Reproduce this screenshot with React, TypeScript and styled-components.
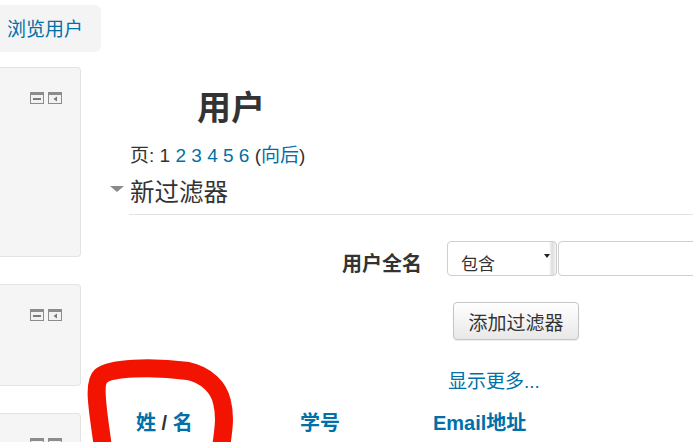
import React from "react";
import styled, { createGlobalStyle } from "styled-components";

const GlobalStyle = createGlobalStyle`
  html, body { margin: 0; padding: 0; background: #fff; }
  body {
    font-family: "Liberation Sans", "Noto Sans CJK SC", sans-serif;
    color: #333;
    width: 693px;
    height: 442px;
    overflow: hidden;
  }
`;

const Page = styled.div`
  position: relative;
  width: 693px;
  height: 442px;
  overflow: hidden;
  padding-top: 5px;
  box-sizing: border-box;
`;

const Tab = styled.a`
  display: block;
  width: 94px;
  height: 47px;
  padding-left: 7px;
  line-height: 50px;
  background: #f4f4f4;
  border-radius: 0 6px 6px 0;
  color: #0070a8;
  font-size: 19px;
  text-decoration: none;
`;

const Columns = styled.div`
  display: flex;
  margin-top: 15px;
`;

const Sidebar = styled.div`
  width: 81px;
  flex: none;
  display: flex;
  flex-direction: column;
  gap: 27px;
`;

const Block = styled.div<{ $h: number }>`
  height: ${(p) => p.$h}px;
  box-sizing: border-box;
  background: #f5f5f5;
  border: 1px solid #e3e3e3;
  border-left: none;
  border-radius: 0 4px 4px 0;
  padding: 24px 18px 0 0;
  display: flex;
  justify-content: flex-end;
  align-items: flex-start;
  gap: 4px;
  flex: none;
`;

const IconBox = styled.svg`
  width: 14px;
  height: 12px;
  display: block;
`;

const HideIcon = () => (
  <IconBox viewBox="0 0 14 12">
    <rect x="0.5" y="0.5" width="13" height="11" fill="#f2f2f2" stroke="#8c8c8c" />
    <rect x="0" y="0" width="14" height="3" fill="#8c8c8c" />
    <rect x="3" y="6" width="8" height="2" fill="#7a7a7a" />
  </IconBox>
);

const DockIcon = () => (
  <IconBox viewBox="0 0 14 12">
    <rect x="0.5" y="0.5" width="13" height="11" fill="#f2f2f2" stroke="#8c8c8c" />
    <rect x="0" y="0" width="14" height="3" fill="#8c8c8c" />
    <path d="M9 4.5 L5.5 7 L9 9.5 Z" fill="#7a7a7a" />
  </IconBox>
);

const Main = styled.div`
  flex: 1;
  margin-left: 29px;
`;

const Heading = styled.h2`
  margin: 21px 0 0 87px;
  font-size: 34px;
  line-height: 40px;
  font-weight: bold;
  color: #333;
`;

const Paging = styled.div`
  margin: 17px 0 0 20px;
  font-size: 19px;
  line-height: 22px;
  color: #333;
`;

const Link = styled.a`
  color: #0070a8;
  text-decoration: none;
`;

const Legend = styled.div`
  display: flex;
  align-items: center;
  margin-top: 7px;
  height: 32px;
`;

const Caret = styled.span`
  width: 0;
  height: 0;
  border-left: 7px solid transparent;
  border-right: 7px solid transparent;
  border-top: 6px solid #8a8a8a;
  margin: 0 6px 2px 0;
`;

const LegendText = styled.span`
  font-size: 24.5px;
  color: #333;
`;

const Rule = styled.div`
  margin: 8px 0 0 19px;
  border-top: 1px solid #e3e3e3;
`;

const FormRow = styled.div`
  display: grid;
  grid-template-columns: 337px auto 1fr;
  align-items: center;
  margin-top: 25px;
`;

const Label = styled.label`
  font-weight: bold;
  font-size: 20px;
  text-align: right;
  padding: 8px 25px 0 0;
  color: #333;
`;

const SelectBox = styled.div`
  width: 110px;
  height: 35px;
  box-sizing: border-box;
  border: 1px solid #cfcfcf;
  border-radius: 4px;
  display: flex;
  align-items: center;
  justify-content: space-between;
  padding: 7px 0 0 13px;
  font-size: 17px;
  color: #333;
  background: linear-gradient(to right, #fff 0, #fff 101px, #ddd 104px, #f4f4f4 108px);
`;

const Arrow = styled.span`
  width: 0;
  height: 0;
  border-left: 3px solid transparent;
  border-right: 3px solid transparent;
  border-top: 4px solid #222;
  margin: 0 6px 12px 0;
`;

const TextInput = styled.div`
  height: 35px;
  box-sizing: border-box;
  border: 1px solid #cfcfcf;
  border-radius: 4px;
  margin-left: 1px;
  margin-right: -10px;
  background: #fff;
`;

const Button = styled.button`
  display: block;
  margin: 25px 0 0 343px;
  width: 126px;
  height: 38px;
  border: 1px solid #c5c5c5;
  border-radius: 4px;
  background: linear-gradient(#fff, #e8e8e8);
  box-shadow: 0 1px 1px rgba(0, 0, 0, 0.08);
  font-family: "Liberation Sans", "Noto Sans CJK SC", sans-serif;
  font-size: 19px;
  color: #333;
  padding: 0;
`;

const More = styled.div`
  margin: 30px 0 0 338px;
  font-size: 19px;
  line-height: 24px;
`;

const Table = styled.table`
  margin: 18px 0 0 18px;
  width: 565px;
  table-layout: fixed;
  border-collapse: collapse;
`;

const Th = styled.th<{ $w?: number }>`
  text-align: left;
  font-size: 20px;
  font-weight: bold;
  padding: 0 0 8px 8px;
  line-height: 22px;
  width: ${(p) => (p.$w ? `${p.$w}px` : "auto")};
  border-bottom: 2px solid #ddd;
  color: #333;
  white-space: nowrap;
`;

const Scribble = styled.svg`
  position: absolute;
  left: 0;
  top: 0;
  width: 693px;
  height: 442px;
  pointer-events: none;
`;

export default function App() {
  return (
    <>
      <GlobalStyle />
      <Page>
        <Tab>浏览用户</Tab>
        <Columns>
          <Sidebar>
            <Block $h={190}>
              <HideIcon />
              <DockIcon />
            </Block>
            <Block $h={102}>
              <HideIcon />
              <DockIcon />
            </Block>
            <Block $h={100}>
              <HideIcon />
              <DockIcon />
            </Block>
          </Sidebar>
          <Main>
            <Heading>用户</Heading>
            <Paging>
              页: 1 <Link>2</Link> <Link>3</Link> <Link>4</Link> <Link>5</Link>{" "}
              <Link>6</Link> (<Link>向后</Link>)
            </Paging>
            <Legend>
              <Caret />
              <LegendText>新过滤器</LegendText>
            </Legend>
            <Rule />
            <FormRow>
              <Label>用户全名</Label>
              <SelectBox>
                包含
                <Arrow />
              </SelectBox>
              <TextInput />
            </FormRow>
            <Button>添加过滤器</Button>
            <More>
              <Link>显示更多...</Link>
            </More>
            <Table>
              <thead>
                <tr>
                  <Th $w={156}>
                    <Link>姓</Link> / <Link>名</Link>
                  </Th>
                  <Th $w={125}>
                    <Link>学号</Link>
                  </Th>
                  <Th>
                    <Link>Email地址</Link>
                  </Th>
                </tr>
              </thead>
            </Table>
          </Main>
        </Columns>
        <Scribble viewBox="0 0 693 442">
          <path
            d="M103 448 C99 415 92 384 101 376 C110 368 150 366 188 371 C207 375 219 388 222 402 C226 418 223 432 221 448"
            fill="none"
            stroke="#f21400"
            strokeWidth="18"
            strokeLinecap="round"
            strokeLinejoin="round"
          />
        </Scribble>
      </Page>
    </>
  );
}
